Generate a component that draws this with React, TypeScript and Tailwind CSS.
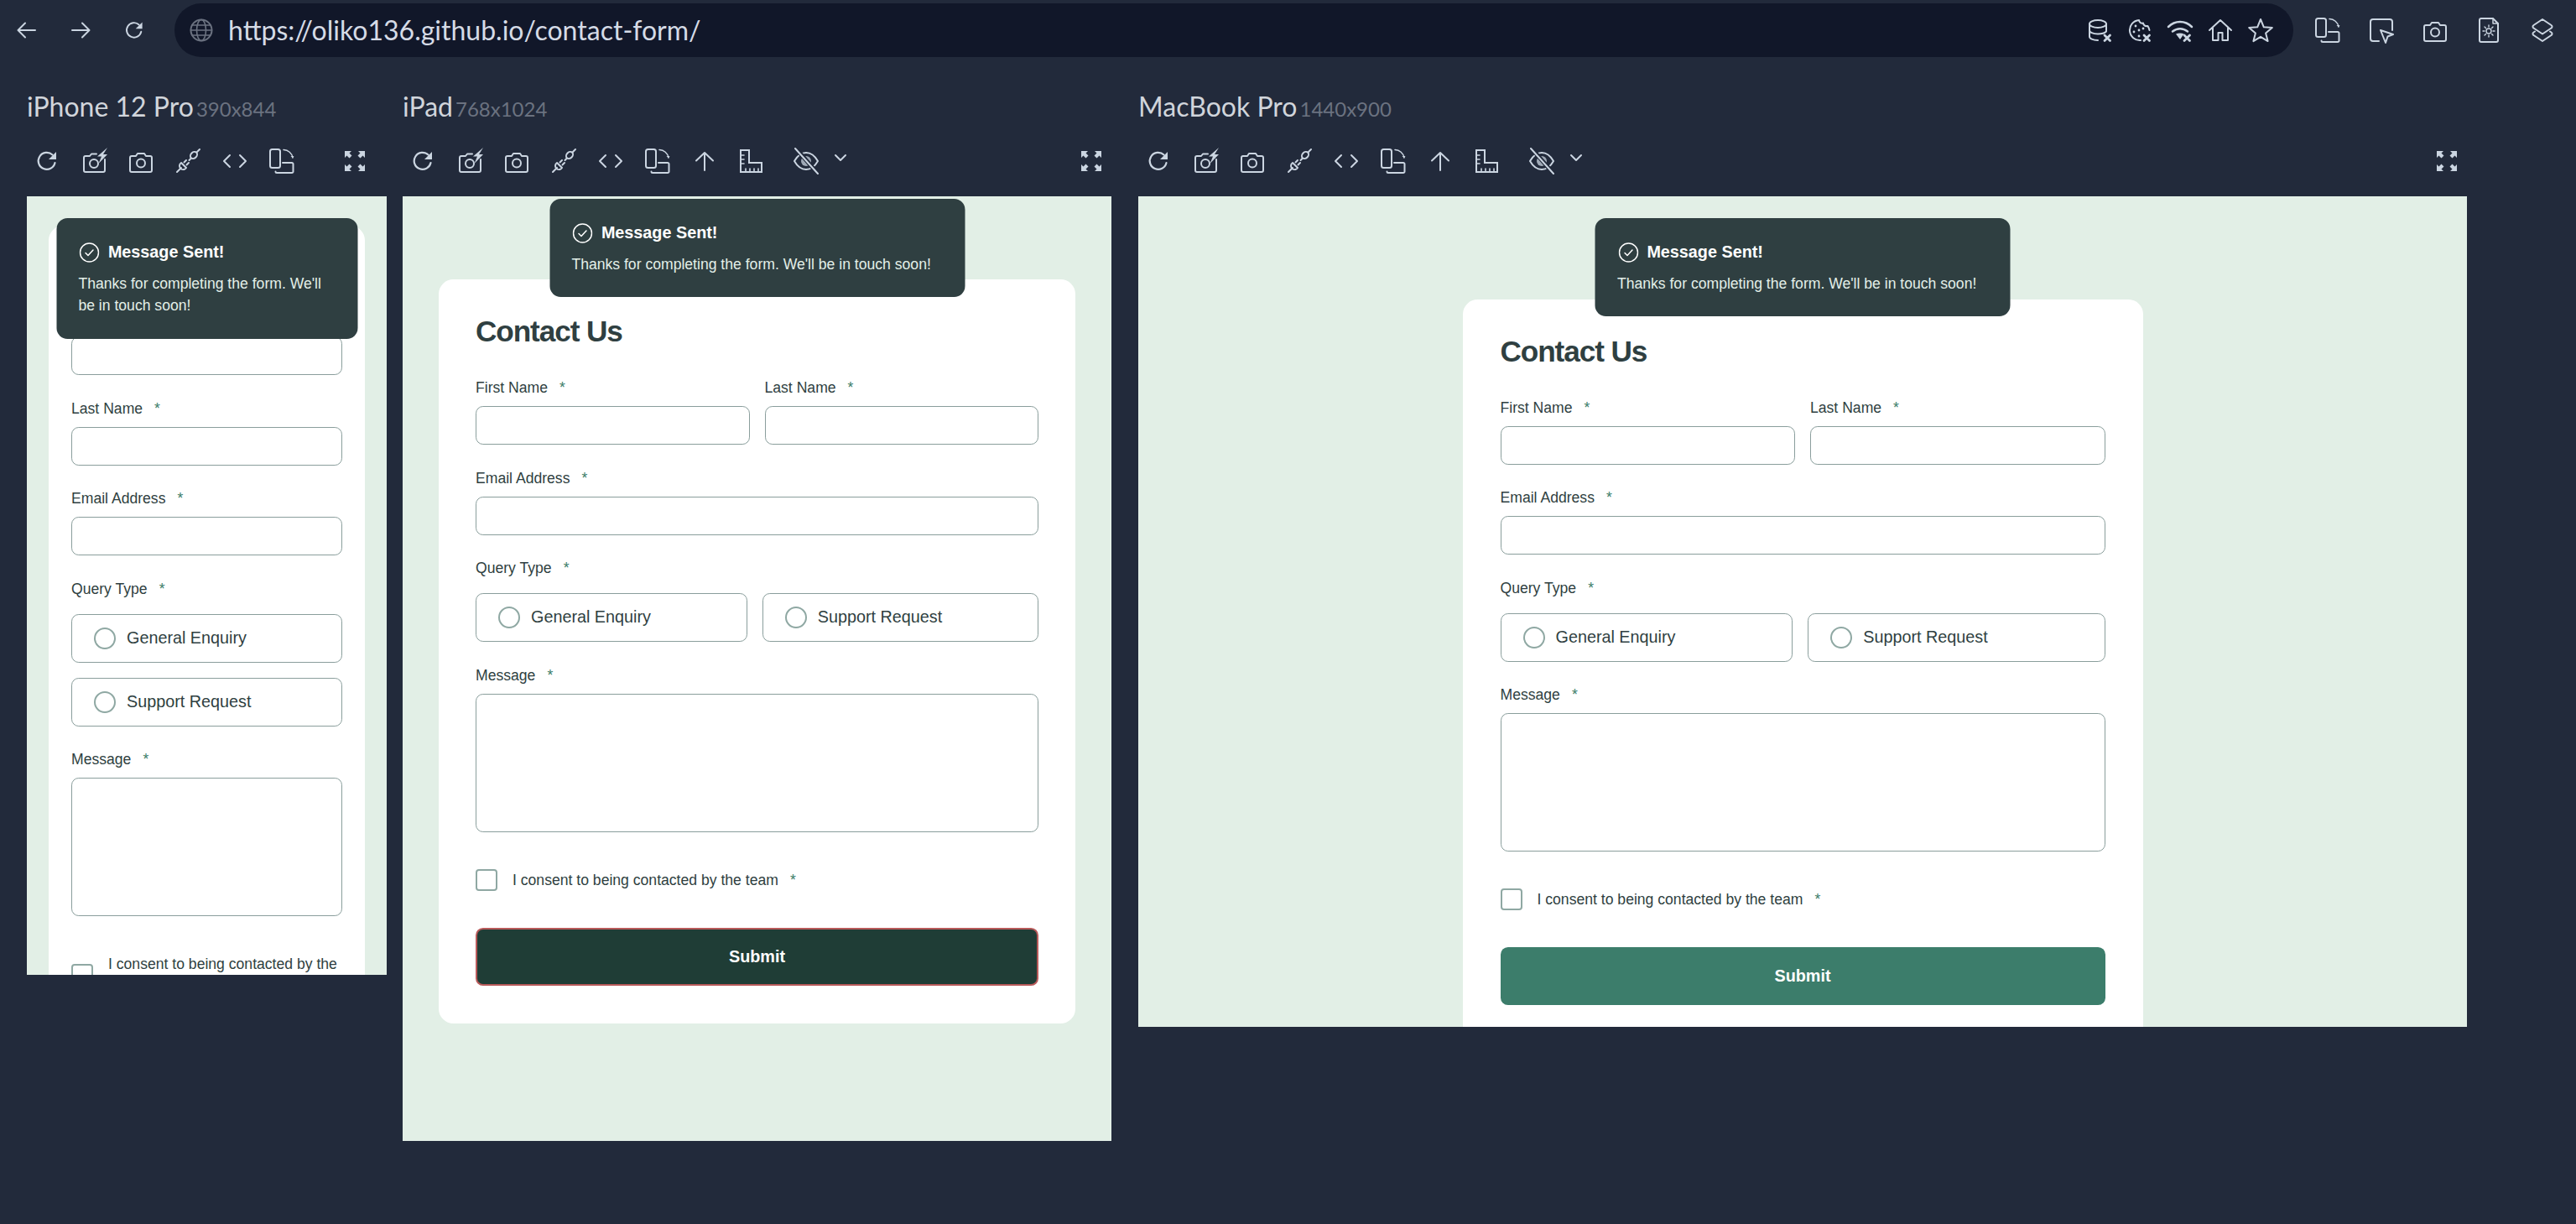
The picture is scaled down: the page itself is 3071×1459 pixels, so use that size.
import React from "react";

type IconProps = { size?: number; className?: string; children: React.ReactNode; sw?: number };

function Ic({ size = 32, className = "", children, sw = 2 }: IconProps) {
  return (
    <svg width={size} height={size} viewBox="0 0 32 32" fill="none" stroke="currentColor" strokeWidth={sw} strokeLinecap="round" strokeLinejoin="round" className={className}>
      {children}
    </svg>
  );
}

const Reload = ({ size = 32 }: { size?: number }) => (
  <Ic size={size} sw={2.2}>
    <path d="M25.5 18a10 10 0 1 1-3-9.5" />
    <path d="M27 5v9h-9z" fill="currentColor" stroke="none" />
  </Ic>
);
const CameraBolt = () => (
  <Ic>
    <path d="M19 7.500h-6l-2 2.500H6a2 2 0 0 0-2 2v15a2 2 0 0 0 2 2h21a2 2 0 0 0 2-2V14" />
    <circle cx="16" cy="19" r="5" />
    <path d="M32 0L20 10.500h5L21.500 19 32 8h-5z" fill="currentColor" stroke="none" />
  </Ic>
);
const Camera = () => (
  <Ic>
    <path d="M3 12a2 2 0 0 1 2-2h5l2-3h8l2 3h5a2 2 0 0 1 2 2v15a2 2 0 0 1-2 2H5a2 2 0 0 1-2-2z" />
    <circle cx="16" cy="18.500" r="5" />
  </Ic>
);
const Plug = () => (
  <Ic>
    <path d="M3 29l5-5" />
    <path d="M8 18l6 6a4.500 4.500 0 0 1-6 1.500 4.500 4.500 0 0 1 0-7.500z" />
    <path d="M11.500 17.500l2.500-2.500M14.500 20.500l2.500-2.500" />
    <ellipse cx="23" cy="9" rx="4.500" ry="3.500" transform="rotate(-45 23 9)" />
    <path d="M19.500 13l-2 2M27 5l3-3" />
  </Ic>
);
const Code = () => (
  <Ic>
    <path d="M10 9l-7 7 7 7M22 9l7 7-7 7" />
  </Ic>
);
const RotateDevice = () => (
  <Ic>
    <rect x="2" y="2" width="12" height="22" rx="2.500" />
    <path d="M18 2.500c5.500.3 10 4 11 9.500" strokeWidth="1.500" />
    <path d="M29 12.500l-2.500-2.500h4z" fill="currentColor" stroke="none" />
    <path d="M17 18h11a1.500 1.500 0 0 1 1.500 1.500v9a1.500 1.500 0 0 1-1.500 1.500H10a1.500 1.500 0 0 1-1.500-1.500" />
  </Ic>
);
const ArrowUp = () => (
  <Ic>
    <path d="M16 27V6M6 15.500L16 6l10 9.500" />
  </Ic>
);
const Ruler = () => (
  <Ic>
    <path d="M3 3h10v15h15v11H3z" strokeLinejoin="miter" />
    <path d="M3 9h4M3 14h4M3 19h4M9 29v-4M14 29v-4M19 29v-4M24 29v-4" strokeWidth="1.600" />
  </Ic>
);
const EyeOff = () => (
  <Ic>
    <path d="M2 16c4-7 9-10 14-10s10 3 14 10c-4 7-9 10-14 10S6 23 2 16z" />
    <circle cx="16" cy="16" r="6" fill="currentColor" stroke="none" opacity="0.75" />
    <path d="M4 1l26 30" stroke="#222a3b" strokeWidth="5" />
    <path d="M3 1l27 30" />
  </Ic>
);
const Expand = () => (
  <Ic>
    <g fill="currentColor" stroke="none">
      <path d="M4 4h8L9.500 6.500l3 3-3 3-3-3L4 12z" />
      <path d="M28 4h-8l2.500 2.500-3 3 3 3 3-3L28 12z" />
      <path d="M4 28h8l-2.500-2.500 3-3-3-3-3 3L4 20z" />
      <path d="M28 28h-8l2.500-2.500-3-3 3-3 3 3L28 20z" />
    </g>
  </Ic>
);
const Chevron = () => (
  <svg width="16" height="10" viewBox="0 0 16 10" fill="none" stroke="currentColor" strokeWidth="2" strokeLinecap="round" strokeLinejoin="round">
    <path d="M2 2l6 6 6-6" />
  </svg>
);
const Back = () => (
  <Ic sw={2}>
    <path d="M26 16H6M14 7.500L5.500 16l8.500 8.500" />
  </Ic>
);
const Forward = () => (
  <Ic sw={2}>
    <path d="M6 16h20M18 7.500l8.500 8.500-8.500 8.500" />
  </Ic>
);
const Globe = () => (
  <Ic>
    <circle cx="16" cy="16" r="12.500" />
    <path d="M3.500 16h25M5 10h22M5 22h22" strokeWidth="1.600" />
    <ellipse cx="16" cy="16" rx="5.500" ry="12.500" strokeWidth="1.600" />
  </Ic>
);
const XMark = ({ x = 20, y = 21 }: { x?: number; y?: number }) => (
  <path d={`M${x} ${y}l6.500 6.500M${x + 6.5} ${y}l-6.500 6.500`} strokeWidth="2.800" />
);
const DbX = () => (
  <Ic>
    <ellipse cx="14" cy="8.500" rx="10" ry="4.500" />
    <path d="M4 8.500v15c0 2.500 4 4.500 10 4.500M24 8.500v8M4 16c0 2.500 4 4.500 10 4.500s8-1 10-3" />
    <XMark x={22} y={22} />
  </Ic>
);
const CookieX = () => (
  <Ic>
    <path d="M15 4a12 12 0 1 0 2 24M15 4c.5 3 2.500 4 5 3.500.5 2.500 2.500 4 5.500 3.500 1 1.500 1.500 3 2 5" />
    <path d="M11 11v.1M9 18v.1M15 16v.1M15 23v.1M20 14v.1" strokeWidth="2.800" />
    <XMark x={21} y={22} />
  </Ic>
);
const WifiX = () => (
  <Ic>
    <path d="M2 12c8-8 20-8 28 0" strokeWidth="2.500" />
    <path d="M7 17.500c5.500-4.500 12.500-4.500 18 0" strokeWidth="2.500" />
    <path d="M11 20.500c3-1.200 7-1.200 9.500 0L16 27z" fill="currentColor" stroke="none" />
    <XMark x={21} y={22} />
  </Ic>
);
const Home = () => (
  <Ic>
    <path d="M3 16L16 4l13 12M7 13.500V28h6.500v-9h5v9H25V13.500" />
  </Ic>
);
const Star = () => (
  <Ic>
    <path d="M16 3l3.800 9.300 10 .7-7.700 6.400 2.500 9.700L16 23.800 7.400 29.100l2.500-9.700L2.200 13l10-.7z" />
  </Ic>
);
const CursorBox = () => (
  <Ic>
    <path d="M13 29H6a3 3 0 0 1-3-3V6a3 3 0 0 1 3-3h20a3 3 0 0 1 3 3v10" />
    <path d="M15 16l15 5-6.500 2.500L21 31z" />
  </Ic>
);
const FileSun = () => (
  <Ic>
    <path d="M21 2H7a2 2 0 0 0-2 2v24a2 2 0 0 0 2 2h18a2 2 0 0 0 2-2V8z" />
    <path d="M21 2v6h6" strokeWidth="1.500" />
    <circle cx="16" cy="17" r="3" strokeWidth="1.400" />
    <path d="M16 10v2M16 22v2M9 17h2M21 17h2M11 12l1.500 1.500M19.500 20.500L21 22M11 22l1.500-1.500M19.500 13.500L21 12" strokeWidth="1.400" />
  </Ic>
);
const Layers = () => (
  <Ic>
    <path d="M16 3l10.500 7a2 2 0 0 1 0 3.500L16 20.500 5.500 13.500a2 2 0 0 1 0-3.500z" />
    <path d="M7 17.500l-1.500 1a2 2 0 0 0 0 3.500L16 29l10.500-7a2 2 0 0 0 0-3.500l-1.500-1" />
  </Ic>
);

const Btn = ({ children }: { children: React.ReactNode }) => (
  <div className="flex h-[48px] w-[56px] shrink-0 items-center justify-center text-[#cbd5e1]">{children}</div>
);

const Star2 = () => <span className="ml-[14px] text-[#3d7e6a]">*</span>;

const Field = ({ label, children, mt = "mt-[29.5px]" }: { label: string; children: React.ReactNode; mt?: string }) => (
  <div className={`flex-1 ${mt}`}>
    <label className="mb-[12px] block text-[17.6px] leading-[20px]">
      {label}
      <Star2 />
    </label>
    {children}
  </div>
);

const Input = () => <input className="block h-[46px] w-full rounded-[8.8px] border border-[#8a9e9c] bg-white" />;

const Radio = ({ label }: { label: string }) => (
  <label className="flex h-[58px] flex-auto items-center gap-[13px] rounded-[8.8px] border border-[#8a9e9c] pr-[26px] pl-[26px] text-[19.8px]">
    <span className="h-[26px] w-[26px] shrink-0 rounded-full border-2 border-[#8fa8a3]" />
    {label}
  </label>
);

function Form({ stack, submitClass }: { stack: boolean; submitClass: string }) {
  return (
    <form>
      <h1 className="h-[38px] text-[35.2px] leading-[36px] font-bold tracking-[-1.1px]">Contact Us</h1>
      {stack ? (
        <>
          <Field label="First Name" mt="mt-[36px]">
            <Input />
          </Field>
          <Field label="Last Name">
            <Input />
          </Field>
        </>
      ) : (
        <div className="mt-[37px] flex gap-[18px]">
          <Field label="First Name" mt="mt-0">
            <Input />
          </Field>
          <Field label="Last Name" mt="mt-0">
            <Input />
          </Field>
        </div>
      )}
      <Field label="Email Address">
        <Input />
      </Field>
      <div className="mt-[29.5px]">
        <label className="mb-[20px] block text-[17.6px] leading-[20px]">
          Query Type
          <Star2 />
        </label>
        <div className={stack ? "flex flex-col gap-[18px]" : "flex gap-[18px]"}>
          <Radio label="General Enquiry" />
          <Radio label="Support Request" />
        </div>
      </div>
      <Field label="Message">
        <textarea className="block h-[165px] w-full resize-none rounded-[8.8px] border border-[#8a9e9c] bg-white" />
      </Field>
      <div className="mt-[44px] flex items-center gap-[18px] text-[17.6px] leading-[26.4px]">
        <span className="h-[26px] w-[26px] shrink-0 rounded-[4px] border-2 border-[#8fa8a3]" />
        <span>
          I consent to being contacted by the team
          <Star2 />
        </span>
      </div>
      <button type="button" className={`mt-[44px] block h-[69px] w-full rounded-[8.8px] text-[19.8px] font-bold text-white ${submitClass}`}>
        Submit
      </button>
    </form>
  );
}

const Toast = ({ className }: { className: string }) => (
  <div className={`absolute left-1/2 -translate-x-1/2 rounded-[13px] bg-[#2f3f41] px-[26.4px] py-[26px] text-[#e3efe8] ${className}`}>
    <div className="mb-[9px] flex h-[30px] items-center gap-[10px] pl-[1.5px] text-[19.8px] font-bold text-white">
      <svg width="24" height="24" viewBox="0 0 24 24" fill="none" stroke="currentColor" strokeWidth="1.500" strokeLinecap="round" strokeLinejoin="round">
        <circle cx="12" cy="12" r="11" />
        <path d="M7.500 12.500l3 3 6-6.500" />
      </svg>
      Message Sent!
    </div>
    <p className="text-[17.6px] leading-[26.4px]">Thanks for completing the form. We'll be in touch soon!</p>
  </div>
);

const Title = ({ name, size }: { name: string; size: string }) => (
  <div className="mt-[35px] flex h-[40px] items-baseline gap-[3px] leading-[40px]">
    <span className="text-[32px] text-[#d1d5db]">{name}</span>
    <span className="text-[24px] text-[#6b7280]">{size}</span>
  </div>
);

const BaseTools = () => (
  <>
    <Btn><Reload /></Btn>
    <Btn><CameraBolt /></Btn>
    <Btn><Camera /></Btn>
    <Btn><Plug /></Btn>
    <Btn><Code /></Btn>
    <Btn><RotateDevice /></Btn>
  </>
);

const ExtraTools = () => (
  <>
    <Btn><ArrowUp /></Btn>
    <Btn><Ruler /></Btn>
    <div className="ml-[9px] flex h-[48px] w-[56px] shrink-0 items-center justify-center text-[#cbd5e1]"><EyeOff /></div>
    <div className="ml-[1px] flex h-[40px] w-[24px] shrink-0 items-center justify-center text-[#cbd5e1]"><Chevron /></div>
  </>
);

export default function App() {
  const sans = { fontFamily: '"Liberation Sans", Arial, sans-serif' };
  return (
    <div className="h-[1459px] w-[3071px] overflow-hidden bg-[#222a3b] pt-[4px] font-[Lato,sans-serif]">
      {/* browser bar */}
      <div className="flex h-[64px] items-center">
        <div className="flex h-[64px] w-[64px] items-center justify-center text-[#cbd5e1]"><Back /></div>
        <div className="flex h-[64px] w-[64px] items-center justify-center text-[#cbd5e1]"><Forward /></div>
        <div className="flex h-[64px] w-[64px] items-center justify-center text-[#cbd5e1]"><Reload size={28} /></div>
        <div className="ml-[16px] flex h-[64px] w-[2526px] items-center rounded-full bg-[#111729] pr-[15px] pl-[16px]">
          <span className="text-[#6b7280]"><Globe /></span>
          <span className="ml-[16px] flex-1 text-[32px] text-[#d5dbe6]">https://oliko136.github.io/contact-form/</span>
          {[<DbX key="a" />, <CookieX key="b" />, <WifiX key="c" />, <Home key="d" />, <Star key="e" />].map((ic, i) => (
            <div key={i} className="flex w-[48px] items-center justify-center text-[#cbd5e1]">{ic}</div>
          ))}
        </div>
        <div className="ml-[9px] flex">
          {[<RotateDevice key="a" />, <CursorBox key="b" />, <Camera key="c" />, <FileSun key="d" />, <Layers key="e" />].map((ic, i) => (
            <div key={i} className="flex w-[64px] items-center justify-center text-[#cbd5e1]">{ic}</div>
          ))}
        </div>
      </div>

      {/* panes */}
      <div className="flex pl-[32px]">
        <section className="mt-[4px] w-[429px] shrink-0">
          <Title name="iPhone 12 Pro" size="390x844" />
          <div className="mt-[21px] ml-[-4px] flex h-[48px]">
            <BaseTools />
            <div className="mr-[10px] ml-auto"><Btn><Expand /></Btn></div>
          </div>
          <div className="relative mt-[18px] h-[928px] overflow-hidden bg-[#e2efe6] text-[#2f3f41]" style={sans}>
            <div className="mx-[26px] mt-[35px] rounded-[17.6px] bg-white px-[27px] pt-[26px] pb-[26px]">
              <Form stack submitClass="bg-[#3c7d6b]" />
            </div>
            <Toast className="top-[26px] w-[359px]" />
          </div>
        </section>

        <section className="mt-[4px] ml-[19px] w-[845px] shrink-0">
          <Title name="iPad" size="768x1024" />
          <div className="mt-[21px] ml-[-4px] flex h-[48px]">
            <BaseTools />
            <ExtraTools />
            <div className="mr-[-4px] ml-auto"><Btn><Expand /></Btn></div>
          </div>
          <div className="relative mt-[18px] h-[1126px] overflow-hidden bg-[#e2efe6] text-[#2f3f41]" style={sans}>
            <div className="mx-[43px] mt-[99px] rounded-[17.6px] bg-white px-[44px] pt-[44px] pb-[45px]">
              <Form stack={false} submitClass="border-2 border-[#b85a5a] bg-[#1f3d36]" />
            </div>
            <Toast className="top-[3px] w-[495px]" />
          </div>
        </section>

        <section className="mt-[4px] ml-[32px] w-[1584px] shrink-0">
          <Title name="MacBook Pro" size="1440x900" />
          <div className="mt-[21px] ml-[-4px] flex h-[48px]">
            <BaseTools />
            <ExtraTools />
            <div className="mr-[-4px] ml-auto"><Btn><Expand /></Btn></div>
          </div>
          <div className="relative mt-[18px] h-[990px] overflow-hidden bg-[#e2efe6] text-[#2f3f41]" style={sans}>
            <div className="mx-auto mt-[122.5px] w-[811px] rounded-[17.6px] bg-white px-[45px] pt-[44px] pb-[45px]">
              <Form stack={false} submitClass="bg-[#3c7d6b]" />
            </div>
            <Toast className="top-[26px] w-[495px]" />
          </div>
        </section>
      </div>
    </div>
  );
}
